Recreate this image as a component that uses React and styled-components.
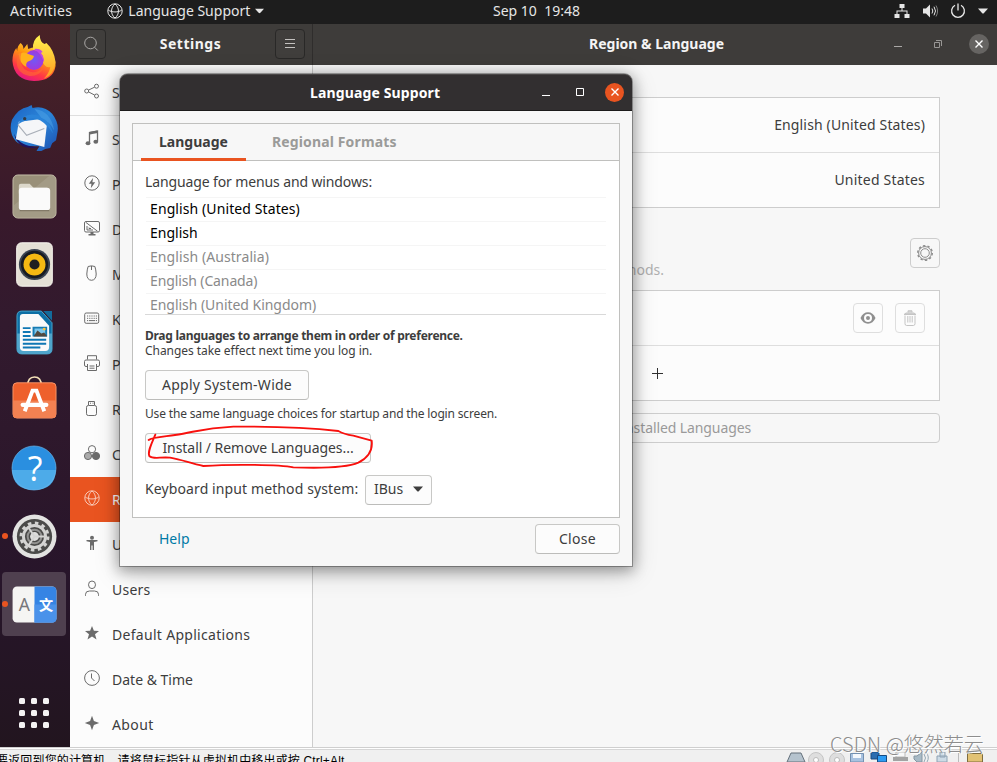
import React from "react";
import styled, { createGlobalStyle, css } from "styled-components";

const Global = createGlobalStyle`
  * { box-sizing: border-box; }
  body { margin: 0; overflow: hidden; }
`;

const Screen = styled.div`
  position: relative;
  width: 997px;
  height: 762px;
  overflow: hidden;
  display: flex;
  flex-direction: column;
  background: #f7f7f7;
  color: #3d3d3d;
  font-family: "Noto Sans", "Noto Sans CJK SC", sans-serif;
  font-size: 14px;
`;

const Label = styled.span`
  white-space: pre;
  letter-spacing: ${(p) => p.$ls || 0}px;
`;

/* ---------- top bar ---------- */
const TopBar = styled.header`
  flex: none;
  height: 24px;
  display: grid;
  grid-template-columns: 483px auto 1fr;
  align-items: center;
  background: #1d1d1d;
  color: #e6e6e6;
  line-height: 20px;
  padding: 0 9px 3px 10px;
`;
const TopGroup = styled.div`
  display: flex;
  align-items: center;
`;
const AppMenu = styled.div`
  display: flex;
  align-items: center;
  margin-left: 35px;
  gap: 5px;
`;
const Clock = styled.div`
  white-space: pre;
`;
const Tray = styled.div`
  display: flex;
  justify-content: flex-end;
  align-items: center;
  gap: 12px;
`;

const Desktop = styled.div`
  flex: none;
  height: 723px;
  display: flex;
`;

/* ---------- dock ---------- */
const Dock = styled.nav`
  flex: none;
  width: 70px;
  padding: 4px 2px 0;
  display: flex;
  flex-direction: column;
  gap: 4px;
  background: linear-gradient(#4a2226 0, #431f28 70px, #38192b 190px, #321a2e 300px, #2c172b 460px, #27152a 560px, #22151f 723px);
`;
const DockItem = styled.div`
  position: relative;
  width: 64px;
  height: 64px;
  padding-bottom: ${(p) => p.$lift || 0}px;
  display: flex;
  align-items: center;
  justify-content: center;
  border-radius: 4px;
  background: ${(p) => (p.$active ? "#4f404f" : "transparent")};
`;
const RunningDot = styled.i`
  position: absolute;
  left: 0;
  top: 29px;
  width: 6px;
  height: 6px;
  border-radius: 50%;
  background: #e95420;
`;
const AppsGrid = styled.div`
  margin: 58px 0 0 17px;
  display: grid;
  grid-template-columns: repeat(3, 6px);
  gap: 6px;
`;
const AppsDot = styled.i`
  height: 6px;
  border-radius: 1.5px;
  background: #f4f2f3;
`;

/* ---------- settings window ---------- */
const SettingsWindow = styled.main`
  flex: none;
  width: 927px;
  display: flex;
`;
const Sidebar = styled.aside`
  flex: none;
  width: 243px;
  border-right: 1px solid #cdcdcd;
  background: #fcfcfc;
`;
const Header = styled.div`
  height: 41px;
  display: flex;
  align-items: center;
  background: #3e3c3a;
  color: #f4f4f4;
  font-weight: 700;
  line-height: 20px;
`;
const SideHeader = styled(Header)`
  width: 243px;
  padding: 0 7px 1px 6px;
  justify-content: space-between;
  border-right: 1px solid #2f2d2c;
`;
const MainHeader = styled(Header)`
  padding: 0 8px 1px 276px;
  justify-content: space-between;
`;
const HeaderButton = styled.div`
  width: 30px;
  height: 30px;
  display: flex;
  align-items: center;
  justify-content: center;
  border: 1px solid #292827;
  border-radius: 4px;
  background: #403e3c;
`;
const WindowControls = styled.div`
  display: flex;
  align-items: center;
  gap: ${(p) => p.$gap}px;
`;
const CloseCircle = styled.div`
  width: ${(p) => p.$size}px;
  height: ${(p) => p.$size}px;
  border-radius: 50%;
  display: flex;
  align-items: center;
  justify-content: center;
  background: ${(p) => p.$bg};
`;
const SideRow = styled.div`
  height: 45px;
  display: flex;
  align-items: center;
  gap: 12px;
  padding-left: 14px;
  line-height: 20px;
  ${(p) => p.$first && css`
    height: 51px;
    padding-top: 5px;
    border-bottom: 1px solid #dedede;
    margin-bottom: 1px;
  `}
  color: ${(p) => (p.$selected ? "#fff" : "#3d3d3d")};
  background: ${(p) => (p.$selected ? "#e95420" : "transparent")};
`;
const IconSlot = styled.div`
  width: 16px;
  height: 16px;
  margin: 0 0 3px 0;
  display: flex;
  color: ${(p) => (p.$light ? "#f9c9b8" : "#6b6b6b")};
`;
const MainPane = styled.section`
  width: 684px;
`;
const Panel = styled.div`
  width: 565px;
  margin: 32px 0 0 62px;
  display: flex;
  flex-direction: column;
`;
const ListBox = styled.div`
  border: 1px solid #cdcdcd;
  background: #fcfcfc;
`;
const ListRow = styled.div`
  height: ${(p) => (p.$last ? 54 : 55)}px;
  border-bottom: ${(p) => (p.$last ? 0 : "1px solid #dedede")};
  padding: ${(p) => (p.$center ? 0 : "0 14px 1px")};
  display: flex;
  align-items: center;
  justify-content: ${(p) => (p.$center ? "center" : "flex-end")};
  gap: 12px;
`;
const SourcesHead = styled.div`
  height: 82px;
  padding-top: 30px;
  display: flex;
  justify-content: flex-end;
  align-items: flex-start;
`;
const Hint = styled.div`
  margin: 22px 246px 0 0;
  line-height: 20px;
  color: #b0b0b0;
`;
const ToolButton = styled.div`
  width: 30px;
  height: 30px;
  border: 1px solid ${(p) => (p.$faint ? "#dedede" : "#cdcdcd")};
  border-radius: 4px;
  display: flex;
  align-items: center;
  justify-content: center;
`;
const ManageButton = styled.div`
  height: 30px;
  margin-top: 12px;
  padding-bottom: 1px;
  border: 1px solid #cdcdcd;
  border-radius: 4px;
  display: flex;
  align-items: center;
  justify-content: center;
  color: #9a9a9a;
`;

/* ---------- dialog ---------- */
const Dialog = styled.div`
  position: absolute;
  left: 120px;
  top: 74px;
  width: 512px;
  height: 492px;
  border-radius: 8px 8px 0 0;
  background: #f7f7f7;
  box-shadow: 0 0 0 1px rgba(0, 0, 0, 0.3), 0 3px 14px 2px rgba(0, 0, 0, 0.33), 0 6px 28px rgba(0, 0, 0, 0.16);
`;
const DialogHeader = styled.div`
  height: 37px;
  border-radius: 7px 7px 0 0;
  border-top: 1px solid #4a4747;
  border-bottom: 1px solid #1c1b1b;
  background: #322f30;
  color: #fff;
  font-weight: 700;
  display: flex;
  align-items: center;
  justify-content: space-between;
  padding: 0 8px 0 190px;
`;
const DialogControls = styled(WindowControls)`
  padding-bottom: 1px;
`;
const Notebook = styled.div`
  width: 488px;
  height: 395px;
  margin: 12px 12px 0;
  border: 1px solid #c0c0be;
  background: #fff;
`;
const Tabs = styled.div`
  height: 37px;
  padding-left: 8px;
  display: flex;
  border-bottom: 1px solid #c0c0be;
  background: #f7f7f7;
`;
const Tab = styled.div`
  height: 37px;
  padding: 0 18px;
  line-height: 35px;
  font-weight: 700;
  color: ${(p) => (p.$active ? "#3d3d3d" : "#9b9b99")};
  margin-right: 8px;
  ${(p) => p.$active && css`
    width: 105px;
    border-bottom: 3px solid #e95420;
  `}
`;
const TabBody = styled.div`
  padding: 11px 12px 0;
`;
const LanguageList = styled.div`
  width: 461px;
  height: 118px;
  margin-top: 5px;
  margin-bottom: 13px;
  overflow: hidden;
  border-bottom: 1px solid #d9d9d9;
`;
const LanguageRow = styled.div`
  height: 24px;
  margin-left: 1px;
  border-top: 1px solid #f5f5f5;
  padding-left: 4px;
  line-height: 21px;
  color: ${(p) => (p.$dim ? "#8a8a8a" : "#000")};
`;
const BodyLine = styled.div`
  line-height: 20px;
`;
const Note = styled.div`
  font-size: 12px;
  line-height: 15px;
  font-weight: ${(p) => (p.$bold ? 700 : 400)};
  margin-bottom: ${(p) => p.$after || 0}px;
`;
const Button = styled.div`
  width: ${(p) => p.$w}px;
  height: 30px;
  margin-bottom: ${(p) => p.$after || 0}px;
  padding-bottom: 2px;
  display: flex;
  align-items: center;
  justify-content: center;
  gap: 10px;
  border: 1px solid #c8c8c6;
  border-bottom-color: #bcbcba;
  border-radius: 4px;
  background: #fcfcfc;
`;
const InputRow = styled.div`
  display: flex;
  align-items: flex-start;
  justify-content: space-between;
  width: 287px;
  line-height: 28px;
`;
const DialogFooter = styled.div`
  display: flex;
  align-items: center;
  justify-content: space-between;
  padding: 6px 12px 0 39px;
`;
const Link = styled.div`
  color: #007aa6;
  line-height: 28px;
`;
const Annotation = styled.svg`
  position: absolute;
  left: 120px;
  top: 420px;
`;

/* ---------- host status bar ---------- */
const HostBar = styled.footer`
  flex: none;
  height: 15px;
  border-top: 1px solid #cfcfcf;
  background: linear-gradient(#fff 0 1px, #d6d6d6 1px 2px, #f0f0f0 2px);
  display: flex;
  justify-content: space-between;
  padding: 4px 14px 0 0;
  overflow: hidden;
`;
const HostText = styled.div`
  margin-left: -4px;
  white-space: nowrap;
  font: 12px/18px "Liberation Sans", "Noto Sans CJK SC", sans-serif;
  letter-spacing: 0.16px;
  color: #000;
`;
const HostIcons = styled.svg`
  flex: none;
`;
const Watermark = styled.div`
  position: absolute;
  left: 830px;
  top: 731px;
  font: 300 20px/26px "Noto Sans CJK SC", sans-serif;
  color: #8d8d8d;
  text-shadow: 1px 1px 0 #fff;
  white-space: nowrap;
`;

/* ---------- icons ---------- */
const Svg = ({ s = 16, children, ...rest }) => (
  <svg width={s} height={s} viewBox="0 0 16 16" fill="none" stroke="currentColor" {...rest}>{children}</svg>
);
const Globe = (p) => (
  <Svg {...p}>
    <circle cx="8" cy="8" r="7.2" />
    <path d="M8 1C3.4 4.5 3.4 11.5 8 15M8 1c4.6 3.5 4.6 10.500 0 14M1.200 7c3.500 2.600 10.100 2.600 13.600 0" />
  </Svg>
);
const Caret = ({ w = 10 }) => (
  <svg width={w} height="6" viewBox="0 0 10 6"><path d="M0 .5h10L6 5q-1 1-2 0z" fill="currentColor" /></svg>
);
const Cross = ({ w = 1.4 }) => (
  <svg width="10" height="10" viewBox="0 0 10 10"><path d="M1.500 1.500l7 7m0-7l-7 7" stroke="#fff" strokeWidth={w} /></svg>
);
const icons = {
  share: <Svg><circle cx="2.700" cy="8" r="2" /><circle cx="12.500" cy="3.200" r="2" /><circle cx="12.500" cy="13" r="2" /><path d="M4.500 7.100l6.200-3M4.500 8.900l6.200 3.200" /></Svg>,
  music: <Svg><path d="M5.500 13V2.500l8-1.500v10" strokeWidth="1.300" /><path d="M5.500 3.200l8-1.500" strokeWidth="2.400" /><ellipse cx="4" cy="13.300" rx="2.400" ry="2" fill="currentColor" stroke="none" /><ellipse cx="11.800" cy="11.800" rx="2.400" ry="2" fill="currentColor" stroke="none" /></Svg>,
  power: <Svg><circle cx="8" cy="8" r="7.200" /><path d="M9.200 2.800L4.800 8.700h2.700l-.7 4.500 4.400-5.900H8.400z" fill="currentColor" stroke="none" /></Svg>,
  display: <Svg><rect x=".5" y="1.500" width="15" height="10.500" rx="1.500" /><path d="M2 2.500l11.500 8.700M3 6v4h6M5 7.500v1h2" /><path d="M6.500 12h3v2h2v1.500h-7V14h2z" fill="currentColor" stroke="none" /></Svg>,
  mouse: <Svg><path d="M4.100 1.500Q7.500 .2 10.900 1.500q1 3 1.300 7.500Q12.100 15 7.500 15.300 2.900 15 2.800 9q.3-4.500 1.300-7.500zM7.500 1v4" /></Svg>,
  keyboard: <Svg><rect x=".7" y="3" width="14" height="10.300" rx="1.500" /><path d="M3 6h10M3 8.300h10" strokeDasharray="1.200 1" /><path d="M3 10.600h1.200M5 10.600h6M11.800 10.600H13" /></Svg>,
  printer: <Svg><path d="M3.500 4.500V.7h9v3.800M3 11.500H2q-1.500 0-1.500-1.500V6.500Q.5 5 2 5h12q1.500 0 1.500 1.500V10q0 1.500-1.500 1.500h-1M3.500 9v6.500h9V9M5.500 11h5M5.500 13.200h5" /></Svg>,
  usb: <Svg><rect x="2.500" y="5.500" width="10" height="10" rx="1.800" /><path d="M4.500 5V1.500h6V5M6 3.200h1M8.500 3.200h1" /></Svg>,
  color: <Svg><circle cx="8" cy="4.200" r="3.600" /><circle cx="4" cy="11" r="3.600" fill="#aaa" /><circle cx="12" cy="11" r="3.600" fill="#6b6b6b" /></Svg>,
  globe: <Globe />,
  access: <Svg stroke="none" fill="currentColor"><circle cx="8" cy="2.800" r="2" /><path d="M2.500 5h11v1.300l-3.500.8V15H8.600v-4.500H7.400V15H6V7.100l-3.500-.8z" /></Svg>,
  user: <Svg><ellipse cx="8" cy="4.800" rx="3.500" ry="3.800" /><path d="M1.500 15.800v-1.500q0-3.300 4-3.300h5q4 0 4 3.300v1.500" /></Svg>,
  star: <Svg stroke="none" fill="currentColor"><path d="M8 1l1.900 4.700 5.100.2-4 3.300 1.500 5.300L8 11.600 3.500 14.500 5 9.200l-4-3.300 5.100-.2z" /></Svg>,
  clock: <Svg><circle cx="8" cy="8" r="7.400" /><path d="M7.500 3.500V8l3 3" /></Svg>,
  spark: <Svg stroke="none" fill="currentColor"><path d="M8 .8l1.900 5.300L15.200 8 9.900 9.900 8 15.200 6.100 9.900.8 8l5.300-1.900z" /></Svg>,
};

const Firefox = () => (
  <svg width="46" height="48" viewBox="0 0 48 48" preserveAspectRatio="none">
    <defs>
      <linearGradient id="ffBody" x1=".8" y1="0" x2=".3" y2="1"><stop offset="0" stopColor="#fff04a" /><stop offset=".4" stopColor="#ff980e" /><stop offset=".75" stopColor="#ff3647" /><stop offset="1" stopColor="#e31587" /></linearGradient>
      <linearGradient id="ffTail" x1="0" y1="0" x2="0" y2="1"><stop offset="0" stopColor="#fff44f" /><stop offset="1" stopColor="#ff9a1f" /></linearGradient>
      <radialGradient id="ffBall"><stop offset="0" stopColor="#7059f5" /><stop offset="1" stopColor="#a238dc" /></radialGradient>
    </defs>
    <path d="M10 8q3 2 3 6l4-5 1 5q6-3 12-1 6 0 12 6 5 6 4.500 12Q44 46 24 46 3 45 1.500 26q0-8 4-13l1 3q0-5 3.500-8z" fill="url(#ffBody)" />
    <path d="M30 0q0 7 5 9l2-1q8 7 9.500 19Q45 40 34 44q6-6 7-12-6 2-9-8l-9-10Q22 5 30 0z" fill="url(#ffTail)" />
    <circle cx="24" cy="25" r="10" fill="url(#ffBall)" />
    <path d="M8 19q6-3 10 0l6 2q-1 4-5 5-4 1-3 6-7-3-8-13z" fill="#ffb21c" />
    <path d="M24 14q6-1 9 3l-2 1q4 4 3 9-2-8-10-13z" fill="#c14be0" />
    <path d="M11 17q-3 11 3 17 9 7 20-1-5 9-15 8Q5 38 6 25q1-6 5-8z" fill="#ff6d30" opacity=".6" />
  </svg>
);
const Thunderbird = () => (
  <svg width="49" height="49" viewBox="0 0 50 50">
    <defs><linearGradient id="tb" x1="0" y1="0" x2="1" y2="1"><stop offset="0" stopColor="#1a62c4" /><stop offset=".5" stopColor="#2c86d8" /><stop offset="1" stopColor="#1b4fb0" /></linearGradient></defs>
    <path d="M2 16Q9 4 18 3l4-2 1 3q12-3 20 6 8 10 5 21l-1 6-4 3-2 5-5 1-4 2h-5l3-5Q11 44 6 38-2 29 2 16z" fill="url(#tb)" />
    <path d="M4 30q6 14 26 14-9 2-17-1Q6 39 4 30z" fill="#201360" />
    <path d="M9 18l25-3 4 3-3 26L6 36z" fill="#f5f6f8" />
    <path d="M8 21l9 11 18-7" fill="none" stroke="#a9afb8" strokeWidth="1.200" />
    <path d="M8 21Q14 9 25 11q14 1 19 19-9-13-17-15-6-2-10 2-4 0-9 4z" fill="#2a83d8" />
    <circle cx="15" cy="15" r="1.700" fill="#333c48" />
    <path d="M25 5q17 2 20 22-5-10-13-13z" fill="#4ba0e6" opacity=".55" />
  </svg>
);
const Files = () => (
  <svg width="45" height="45" viewBox="0 0 46 46">
    <rect x="1" y="1" width="44" height="44" rx="5" fill="#999079" stroke="#c4bda8" />
    <path d="M2 44V32L38 2h4l2 2v40z" fill="#fff" opacity=".1" />
    <path d="M7 12q0-2 2-2h9l4 4h14v6H7z" fill="#dcd8cb" />
    <rect x="7" y="14" width="32" height="23" rx="3" fill="#fafafa" />
    <path d="M8 37.500h30" stroke="#766e5b" />
  </svg>
);
const Speaker = () => (
  <svg width="37" height="45" viewBox="0 0 38 46">
    <rect x=".7" y=".7" width="36.600" height="44.600" rx="5" fill="#e4e0d5" stroke="#fbf9f3" />
    <circle cx="19" cy="23" r="16" fill="#3b4451" /><circle cx="19" cy="23" r="14" fill="#181c22" />
    <circle cx="19" cy="23" r="11.300" fill="#f4b913" /><circle cx="19" cy="23" r="5.200" fill="#202020" />
  </svg>
);
const Writer = () => (
  <svg width="37" height="45" viewBox="0 0 38 46">
    <path d="M6 1h20l11 12v27q0 5-5 5H6q-5 0-5-5V6q0-5 5-5z" fill="#0d6fa5" stroke="#47a6cd" />
    <path d="M1 24h36v16q0 5-5 5H6q-5 0-5-5z" fill="#4fa5cb" />
    <path d="M7 4h16l11 12v22q0 4-4 4H8q-4 0-4-4V7q0-3 3-3z" fill="#fafafa" />
    <path d="M28 1h9v10z" fill="#136b9b" />
    <path d="M7 18.500h8M7 22.500h8M7 26.500h8M7 30.500h24M7 34.500h24M7 38.500h18" stroke="#0f77b4" strokeWidth="2" />
    <path d="M18 18h13v8H18z" fill="#7cc7ec" stroke="#167bb2" strokeWidth="2" /><path d="M18 27l4-6 4 3 3-1 3 4z" fill="#52493f" /><circle cx="29" cy="19.500" r="1.500" fill="#ffc33a" />
  </svg>
);
const Software = () => (
  <svg width="45" height="45" viewBox="0 0 46 46">
    <path d="M16 11q0-9 7-9t7 9" fill="none" stroke="#f4e1b8" strokeWidth="1.700" />
    <rect x="1" y="8" width="44" height="36" rx="4" fill="#ee602c" stroke="#f89567" />
    <path d="M1 26h44v14q0 4-4 4H5q-4 0-4-4z" fill="#f28152" />
    <path d="M13 37l8-21h4l8 21" fill="none" stroke="#fff" strokeWidth="4" />
    <path d="M11 30.500h24" stroke="#fff" strokeWidth="4.500" strokeLinecap="round" />
  </svg>
);
const HelpText = styled.text`
  font: 34px "Open Sans", sans-serif;
  fill: #fff;
`;
const TileText = styled.text`
  font: ${(p) => p.$size}px "Noto Sans", "Noto Sans CJK SC", sans-serif;
  font-weight: ${(p) => p.$weight || 400};
  fill: ${(p) => p.$fill};
`;
const HelpIcon = () => (
  <svg width="46" height="46" viewBox="0 0 46 46">
    <circle cx="23" cy="23" r="22" fill="#2a8fe0" /><path d="M1 25h44q-1 20-22 20T1 25z" fill="#4dabe9" />
    <circle cx="23" cy="23" r="22" fill="none" stroke="#69b5ea" strokeWidth=".7" />
    <HelpText x="24" y="36" textAnchor="middle">?</HelpText>
  </svg>
);
const Gear = () => (
  <svg width="45" height="45" viewBox="0 0 46 46">
    <circle cx="23" cy="23" r="22.500" fill="#e3e3e1" /><circle cx="23" cy="23" r="18" fill="#4b4b49" />
    <circle cx="23" cy="23" r="13.800" fill="none" stroke="#d4d4d2" strokeWidth="3" strokeDasharray="3.600 3.620" />
    <circle cx="23" cy="23" r="11.300" fill="none" stroke="#d4d4d2" strokeWidth="3" />
    <circle cx="23" cy="23" r="7" fill="none" stroke="#929290" strokeWidth="2" />
    <circle cx="23" cy="23" r="4.500" fill="#dededc" /><path d="M23 23h10M23 23l-6-9M23 23l-6 9" stroke="#d4d4d2" strokeWidth="2" />
  </svg>
);
const Translate = () => (
  <svg width="45" height="37" viewBox="0 0 46 38">
    <rect x=".5" y=".5" width="45" height="37" rx="4.500" fill="#f5f5f3" />
    <path d="M23 .5h18q4.500 0 4.500 4.500v28q0 4.500-4.500 4.500H23z" fill="#3584e4" /><path d="M23 19h22.500v14q0 4.500-4.500 4.500H23z" fill="#4a92ea" />
    <TileText $size={18} $fill="#77777a" x="12.500" y="25.500" textAnchor="middle">A</TileText>
    <TileText $size={14.5} $weight={700} $fill="#fff" x="35" y="24.500" textAnchor="middle">文</TileText>
  </svg>
);

const dockApps = [
  { icon: <Firefox />, lift: 2 }, { icon: <Thunderbird /> }, { icon: <Files /> }, { icon: <Speaker /> }, { icon: <Writer /> },
  { icon: <Software />, lift: 5 }, { icon: <HelpIcon /> }, { icon: <Gear />, running: true }, { icon: <Translate />, running: true, active: true },
];
const sections = [
  ["share", "Sharing"], ["music", "Sound"], ["power", "Power"], ["display", "Displays"], ["mouse", "Mouse"],
  ["keyboard", "Keyboard"], ["printer", "Printers"], ["usb", "Removable"], ["color", "Color"],
  ["globe", "Region"], ["access", "Universal"], ["user", "Users", 0.25], ["star", "Default Applications", 0.3],
  ["clock", "Date & Time"], ["spark", "About", 0.4],
];
const languages = [
  ["English (United States)", 0.1], ["English", 0], ["English (Australia)", 0.08], ["English (Canada)", -0.12], ["English (United Kingdom)", -0.04],
];

export default function App() {
  return (
    <Screen>
      <Global />
      <TopBar>
        <TopGroup>
          <Label $ls={0.4}>Activities</Label>
          <AppMenu><Globe /><Label>Language Support</Label><Caret w={9} /></AppMenu>
        </TopGroup>
        <Clock>Sep 10  19:48</Clock>
        <Tray>
          <Svg stroke="none" fill="currentColor"><path d="M5.500 1h5v4h-2v2.500h5V11H15.500v4h-5v-4h2V8.500h-9V11h2v4h-5v-4h2V7.500h5V5h-2z" /></Svg>
          <Svg><path d="M1 5.500h3L8 1.500v13l-4-4H1z" fill="currentColor" stroke="none" /><path d="M10 5.500q1.600 2.500 0 5M12 3.700q3 4.300 0 8.600" /><path d="M14 2.500q3.200 5.500 0 11" opacity=".5" /></Svg>
          <Svg><path d="M5 2.300a6.400 6.400 0 1 0 6 0M8 .5v7" strokeWidth="1.300" /></Svg>
          <Caret w={10} />
        </Tray>
      </TopBar>

      <Desktop>
        <Dock>
          {dockApps.map((a, i) => (
            <DockItem key={i} $active={a.active} $lift={a.lift}>{a.icon}{a.running && <RunningDot />}</DockItem>
          ))}
          <AppsGrid>{Array.from({ length: 9 }, (_, i) => <AppsDot key={i} />)}</AppsGrid>
        </Dock>

        <SettingsWindow>
          <Sidebar>
            <SideHeader>
              <HeaderButton><Svg stroke="#a9a7a5"><circle cx="7.500" cy="7" r="5.800" /><path d="M11.500 11.200l3.300 3.300" /></Svg></HeaderButton>
              <Label $ls={0.5}>Settings</Label>
              <HeaderButton><Svg stroke="#c4c2c0"><path d="M3 3.500h10M3 7.500h10M3 11.500h10" /></Svg></HeaderButton>
            </SideHeader>
            {sections.map(([icon, name, ls], i) => (
              <SideRow key={name} $first={i === 0} $selected={icon === "globe"}>
                <IconSlot $light={icon === "globe"}>{icons[icon]}</IconSlot>
                <Label $ls={ls}>{name}</Label>
              </SideRow>
            ))}
          </Sidebar>
          <MainPane>
            <MainHeader>
              <Label>Region &amp; Language</Label>
              <WindowControls $gap={27}>
                <WindowControls $gap={32}>
                  <svg width="8" height="8"><path d="M0 6.500h8" stroke="#aaa8a6" /></svg>
                  <svg width="8" height="8"><path d="M.5 2.500h5v5h-5zM2 .5h5.500V6" fill="none" stroke="#999795" /></svg>
                </WindowControls>
                <CloseCircle $size={20} $bg="#666462"><Cross /></CloseCircle>
              </WindowControls>
            </MainHeader>
            <Panel>
              <ListBox>
                <ListRow><Label $ls={0.14}>English (United States)</Label></ListRow>
                <ListRow $last><Label $ls={0.2}>United States</Label></ListRow>
              </ListBox>
              <SourcesHead>
                <Hint>input methods.</Hint>
                <ToolButton><Svg stroke="#8d8d8d"><circle cx="8" cy="8" r="6.400" /><circle cx="8" cy="8" r="4.300" /><circle cx="8" cy="8" r="7.300" strokeDasharray="2.400 2.187" strokeWidth="1.400" /></Svg></ToolButton>
              </SourcesHead>
              <ListBox>
                <ListRow>
                  <ToolButton $faint><Svg><path d="M.5 8Q3 2.300 8 2.300T15.500 8Q13 13.700 8 13.700T.5 8z" fill="#8f8f8f" stroke="none" /><circle cx="8" cy="8" r="3" stroke="#fcfcfc" strokeWidth="2" /></Svg></ToolButton>
                  <ToolButton $faint><Svg stroke="#c4c4c4"><path d="M2 4.500L4 3h8l2 1.500zM6 2.500V.8h4v1.700" fill="#d4d4d4" /><path d="M3 5.500v8.300q0 1.700 1.700 1.700h6.600q1.700 0 1.700-1.700V5.500M5.800 6v6.500M8 6v6.500M10.200 6v6.500" /></Svg></ToolButton>
                </ListRow>
                <ListRow $last $center><svg width="11" height="11"><path d="M0 5.500h11M5.500 0v11" stroke="#303030" /></svg></ListRow>
              </ListBox>
              <ManageButton><Label $ls={-0.1}>Manage Installed Languages</Label></ManageButton>
            </Panel>
          </MainPane>
        </SettingsWindow>
      </Desktop>

      <HostBar>
        <HostText>要返回到您的计算机，请将鼠标指针从虚拟机中移出或按 Ctrl+Alt</HostText>
        <HostIcons width="200" height="10" viewBox="0 0 200 10">
          <path d="M8 1h10l4 9H4z" fill="#b5c3ce" stroke="#65717b" />
          <circle cx="33" cy="8" r="7.500" fill="#dedede" stroke="#c5c5c5" /><circle cx="33" cy="8" r="2.500" fill="#fff" stroke="#bbb" />
          <circle cx="54" cy="8" r="7.500" fill="#dedede" stroke="#c5c5c5" /><circle cx="54" cy="8" r="2.500" fill="#fff" stroke="#bbb" />
          <path d="M67.500 1.500h13V10h-13z" fill="#a8c2e0" stroke="#7390b0" /><path d="M70 2h8v4h-8z" fill="#f4f8fc" />
          <path d="M88 0h8v7h-8z" fill="#2a6db0" stroke="#174a80" /><path d="M94.500 3.500h9V10h-9z" fill="#2c9cf4" stroke="#174a80" />
          <path d="M113 0h9v5h-9z" fill="#f8f8f8" stroke="#bbb" /><path d="M110 5h15v4h-15z" fill="#a3a3a3" />
          <path d="M131 4h3l5-4v10h-5l-3-3z" fill="#a8bac6" stroke="#8496a2" /><path d="M141 2q3 4 0 8M143 0q4 5 1 10" fill="none" stroke="#96a8b5" />
          <path d="M157 0h5v5h-5zM154 4h10v6h-10z" fill="#cddbe6" stroke="#8fa2b3" />
          <path d="M175.500 0v10" stroke="#bbb" />
          <path d="M184.500 1.500h15V10h-15z" fill="#e2c274" stroke="#7e6c3f" />
        </HostIcons>
      </HostBar>

      <Dialog>
        <DialogHeader>
          <Label $ls={0.13}>Language Support</Label>
          <DialogControls $gap={20}>
            <WindowControls $gap={25}>
              <svg width="9" height="10"><path d="M0 8.500h8" stroke="#fff" /></svg>
              <svg width="9" height="10"><path d="M.5 1.500h7v7h-7z" fill="none" stroke="#fff" /></svg>
            </WindowControls>
            <CloseCircle $size={19} $bg="#e95420"><Cross /></CloseCircle>
          </DialogControls>
        </DialogHeader>
        <Notebook>
          <Tabs>
            <Tab $active><Label>Language</Label></Tab>
            <Tab><Label $ls={0.13}>Regional Formats</Label></Tab>
          </Tabs>
          <TabBody>
            <BodyLine><Label $ls={-0.12}>Language for menus and windows:</Label></BodyLine>
            <LanguageList>
              {languages.map(([l, ls], i) => <LanguageRow key={l} $dim={i > 1}><Label $ls={ls}>{l}</Label></LanguageRow>)}
            </LanguageList>
            <Note $bold><Label $ls={-0.27}>Drag languages to arrange them in order of preference.</Label></Note>
            <Note $after={12}><Label $ls={-0.05}>Changes take effect next time you log in.</Label></Note>
            <Button $w={164} $after={6}><Label $ls={0.25}>Apply System-Wide</Label></Button>
            <Note $after={12}><Label $ls={-0.16}>Use the same language choices for startup and the login screen.</Label></Note>
            <Button $w={226} $after={12}><Label $ls={-0.05}>Install / Remove Languages...</Label></Button>
            <InputRow>
              <Label $ls={0.11}>Keyboard input method system:</Label>
              <Button $w={67}><Label>IBus</Label><Caret w={10} /></Button>
            </InputRow>
          </TabBody>
        </Notebook>
        <DialogFooter>
          <Link>Help</Link>
          <Button $w={85}><Label $ls={0.3}>Close</Label></Button>
        </DialogFooter>
      </Dialog>

      <Annotation width="330" height="150" viewBox="0 0 990 450">
        <path d="M86 60C95 52 130 50 165 45C230 35 250 24 340 20C440 19 540 20 655 33C670 42 680 44 700 47L755 62C758 85 750 110 715 128C680 143 600 145 520 142C480 134 340 132 250 138C210 130 190 120 150 113C120 110 100 119 88 108C82 95 95 70 106 44" fill="none" stroke="#f8100d" strokeWidth="5.500" strokeLinecap="round" strokeLinejoin="round" />
      </Annotation>
      <Watermark>CSDN @悠然若云</Watermark>
    </Screen>
  );
}
